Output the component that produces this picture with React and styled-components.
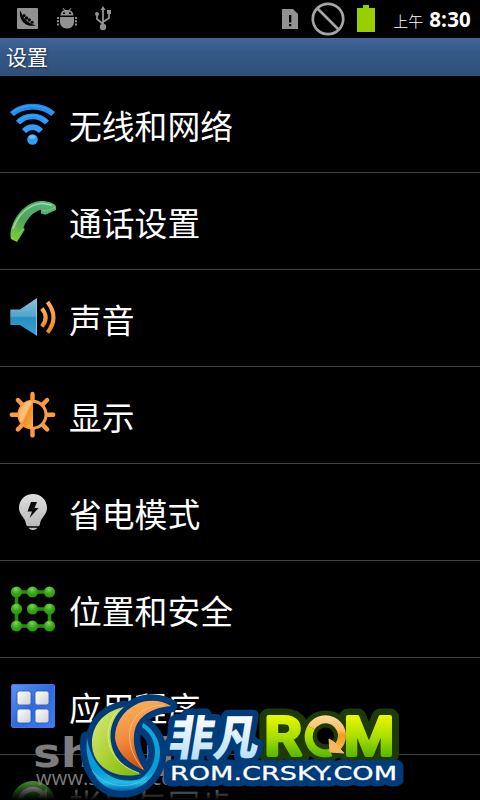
import styled, { createGlobalStyle } from "styled-components";

const GlobalStyle = createGlobalStyle`
    body {
        margin: 0;
        background: #000;
        overflow: hidden;
    }
`

function PeaIcon(){
    return <svg width="21" height="21" viewBox="0 0 21 21">
        <rect width="21" height="21" rx="1" fill="#919191" />
        <path d="M3 2.5L5 6C7 12 13 16 19 17.3C11 19.5 3 15 2.8 5Z" fill="#050505" />
        <g fill="#050505">
            <circle cx="7.2" cy="7.5" r="1.5" />
            <circle cx="9.5" cy="10" r="1.7" />
            <circle cx="12.3" cy="12" r="1.7" />
            <circle cx="15.2" cy="14.3" r="1.5" />
        </g>
    </svg>
}

function AndroidIcon(){
    return <svg width="20" height="21" viewBox="0 0 20 21" fill="#919191">
        <path d="M3.5 7.5C3.5 4.5 5.5 2.6 7 2.2L5.5 0H6.5L8 1.9H12L13.5 0H14.5L13 2.2C14.5 2.6 16.5 4.5 16.5 7.5Z" />
        <path d="M3 9H17V14C17 18 14 20.5 10 20.5S3 18 3 14Z" />
        <path d="M0 9H2V11H0ZM0 12.3H2V14.3H0ZM0 15.6H2V17.6H0ZM18 9H20V11H18ZM18 12.3H20V14.3H18ZM18 15.6H20V17.6H18Z" />
        <rect x="6" y="4.5" width="2" height="1.5" fill="#000" />
        <rect x="12" y="4.5" width="2" height="1.5" fill="#000" />
    </svg>
}

function UsbIcon(){
    return <svg width="17" height="25" viewBox="0 0 17 25" fill="none" stroke="#919191" strokeWidth="1.8">
        <path d="M8 20V3M8 18L2 13V8M8 16L14 12V6" />
        <path d="M5.5 4L8 0L10.5 4Z" fill="#919191" stroke="none" />
        <circle cx="8" cy="21" r="3.2" fill="#919191" stroke="none" />
        <circle cx="2" cy="8" r="2" fill="#919191" stroke="none" />
        <rect x="12" y="4" width="4" height="4" fill="#919191" stroke="none" />
    </svg>
}

function SimIcon(){
    return <svg width="16" height="20" viewBox="0 0 16 20">
        <path d="M0 0H11L16 5V20H0Z" fill="#919191" />
        <path d="M7 6H9.3V13.5H7ZM7 15H9.3V17.2H7Z" fill="#000" />
    </svg>
}

function BlockedIcon(){
    return <svg width="34" height="34" viewBox="0 0 34 34" fill="none" stroke="#a5a5a5" strokeWidth="2.7">
        <circle cx="17" cy="17" r="15.2" />
        <path d="M6.5 6.5L27.5 27.5" />
    </svg>
}

function BatteryIcon(){
    return <svg width="18" height="27" viewBox="0 0 18 27">
        <path d="M6 0H12V3H18V27H0V3H6Z" fill="#96d000" />
    </svg>
}

function WifiIcon(){
    return <svg width="48" height="48" viewBox="0 0 48 48">
        <defs>
            <linearGradient id="wifi" gradientUnits="userSpaceOnUse" x1="0" y1="3" x2="0" y2="45">
                <stop offset="0" stopColor="#1b86ee" />
                <stop offset="0.5" stopColor="#2f9cf8" />
                <stop offset="1" stopColor="#2f9cff" />
            </linearGradient>
        </defs>
        <g fill="none" stroke="url(#wifi)" strokeWidth="5.6">
            <path d="M2.8 14C14 4.2 33 4.2 44.2 14" />
            <path d="M9 22.7C17 14.2 30 14.2 38 22.7" />
            <path d="M15 31.2C20 25.8 27 25.8 32 31.2" />
        </g>
        <circle cx="23.5" cy="39.5" r="5.3" fill="url(#wifi)" />
        <path d="M3.5 12.5C14 3.4 33 3.4 43.5 12.5M9.8 20.8C17 13.6 30 13.6 37.2 20.8" fill="none" stroke="#63b9ff" strokeOpacity="0.5" />
        <ellipse cx="23.3" cy="37" rx="3.3" ry="2" fill="#8dd3ff" fillOpacity="0.65" />
    </svg>
}

function PhoneIcon(){
    return <svg width="48" height="48" viewBox="0 0 48 48">
        <defs>
            <linearGradient id="phone" x1="0.9" y1="0" x2="0.1" y2="1">
                <stop offset="0" stopColor="#58b583" />
                <stop offset="0.6" stopColor="#4ea455" />
                <stop offset="1" stopColor="#7bd03a" />
            </linearGradient>
        </defs>
        <path d="M1.5 39C1.5 25 13 6 31 4C38 3.5 46 6 47 9.5V13L36.5 17.7L32 16.5L32 12.8C25 14.5 18 21 14.5 30.5L15.8 32.5L8 45L2 42Z" fill="url(#phone)" />
        <path d="M4 32C9 18 19 8 33 6.3L43 8.2" fill="none" stroke="#b1e7bb" strokeWidth="1.6" strokeOpacity="0.8" />
        <path d="M33 13.5L37.5 13.8L46 10.5" fill="none" stroke="#8cd9a0" strokeOpacity="0.5" />
        <path d="M8.5 38L14.5 32" fill="none" stroke="#b0f07a" strokeOpacity="0.5" />
    </svg>
}

function SpeakerIcon(){
    return <svg width="48" height="48" viewBox="0 0 48 48">
        <defs>
            <linearGradient id="speaker" x1="0" y1="0" x2="0" y2="1">
                <stop offset="0" stopColor="#8dc5df" />
                <stop offset="0.48" stopColor="#50a4cc" />
                <stop offset="0.52" stopColor="#258fc4" />
                <stop offset="1" stopColor="#3ba0d5" />
            </linearGradient>
            <linearGradient id="wave" x1="0" y1="0" x2="0" y2="1">
                <stop offset="0" stopColor="#ffad63" />
                <stop offset="1" stopColor="#f68a1d" />
            </linearGradient>
        </defs>
        <path d="M1.3 15.5H11L28 4V42L11 31H1.3Z" fill="url(#speaker)" />
        <path d="M27.5 5V41" stroke="#8ec3da" />
        <g fill="none" stroke="url(#wave)" strokeWidth="4">
            <path d="M32.8 14.5Q40.5 23.5 32.8 32.5" />
            <path d="M38.5 8Q50.5 23.5 38.5 38.5" />
        </g>
    </svg>
}

function BrightnessIcon(){
    const rays = [0,45,90,135,180,225,270,315];
    return <svg width="48" height="48" viewBox="0 0 48 48">
        <defs>
            <linearGradient id="sun" x1="0" y1="0" x2="1" y2="1">
                <stop offset="0" stopColor="#ffa54a" />
                <stop offset="0.45" stopColor="#ffc27c" />
                <stop offset="0.55" stopColor="#f48e28" />
                <stop offset="1" stopColor="#ffad57" />
            </linearGradient>
        </defs>
        {rays.map((angle)=><path
            key={angle}
            d="M23.5 3V9.5"
            stroke="#ff9a3d"
            strokeWidth="4.4"
            strokeLinecap="round"
            transform={`rotate(${angle} 23.5 23.7)`}
        />)}
        <circle cx="23.5" cy="23.7" r="13.5" fill="#000" stroke="#f99c43" strokeWidth="3" />
        <path d="M24 9.7A14 14 0 0 0 24 37.7Z" fill="url(#sun)" />
    </svg>
}

function BulbIcon(){
    return <svg width="48" height="48" viewBox="0 0 48 48">
        <defs>
            <linearGradient id="bulb" x1="0" y1="0" x2="0" y2="1">
                <stop offset="0" stopColor="#dedede" />
                <stop offset="1" stopColor="#bababa" />
            </linearGradient>
        </defs>
        <path d="M24 6C32 6 38 12 38 20C38 27 31.5 29.5 31 36Q30.7 38.2 29 38.2H19Q17.3 38.2 17 36C16.5 29.5 10 27 10 20C10 12 16 6 24 6Z" fill="url(#bulb)" />
        <path d="M19.5 39.8H28.5Q27 42 24 42T19.5 39.8Z" fill="#c4c4c4" />
        <path d="M22 14H28L25.5 20H29.5L20.5 30L23 23.5H18.5Z" fill="#0a0a0a" />
    </svg>
}

const patternNodes = [[7.5,7],[23.5,7],[40.5,7],[7.5,24],[23.5,24],[40.5,24],[7.5,41],[23.5,41],[40.5,41]];

function PatternIcon(){
    return <svg width="48" height="48" viewBox="0 0 48 48">
        <defs>
            <radialGradient id="node" cx="0.45" cy="0.25" r="0.8">
                <stop offset="0" stopColor="#7ed653" />
                <stop offset="0.5" stopColor="#36a81a" />
                <stop offset="1" stopColor="#259008" />
            </radialGradient>
        </defs>
        <path d="M40.5 7H7.5V41H40.5V24H23.5" fill="none" stroke="#2b8a12" strokeWidth="3.6" />
        {patternNodes.map(([x,y])=><circle key={`${x}-${y}`} cx={x} cy={y} r="5.6" fill="url(#node)" />)}
    </svg>
}

function AppsIcon(){
    return <svg width="48" height="48" viewBox="0 0 48 48">
        <defs>
            <linearGradient id="apps" x1="0" y1="0" x2="1" y2="1">
                <stop offset="0" stopColor="#5c96ee" />
                <stop offset="0.5" stopColor="#2f6ade" />
                <stop offset="1" stopColor="#3c7df0" />
            </linearGradient>
            <linearGradient id="tile" x1="0" y1="0" x2="1" y2="1">
                <stop offset="0" stopColor="#fff" />
                <stop offset="1" stopColor="#cfcfcf" />
            </linearGradient>
        </defs>
        <rect x="2.5" y="2.5" width="43" height="43" rx="1.5" fill="url(#apps)" stroke="#3f78e6" />
        <g fill="url(#tile)" stroke="#2458bd" strokeWidth="0.8">
            <rect x="8" y="9" width="14" height="14" rx="2.5" />
            <rect x="26" y="9" width="14" height="14" rx="2.5" />
            <rect x="8" y="27" width="14" height="14" rx="2.5" />
            <rect x="26" y="27" width="14" height="14" rx="2.5" />
        </g>
    </svg>
}

function SyncIcon(){
    return <svg width="48" height="48" viewBox="0 0 48 48">
        <defs>
            <linearGradient id="sync" x1="0" y1="0" x2="0" y2="1">
                <stop offset="0" stopColor="#6cc447" />
                <stop offset="0.35" stopColor="#46992c" />
                <stop offset="1" stopColor="#1e5b10" />
            </linearGradient>
        </defs>
        <circle cx="24" cy="24" r="22" fill="url(#sync)" />
        <path d="M11 24A13 13 0 0 1 34 15" fill="none" stroke="#e0e6dd" strokeWidth="5" />
        <path d="M29 18L38 20V9Z" fill="#e0e6dd" />
    </svg>
}

const items = [
    { label:"无线和网络", Icon:WifiIcon },
    { label:"通话设置", Icon:PhoneIcon },
    { label:"声音", Icon:SpeakerIcon },
    { label:"显示", Icon:BrightnessIcon },
    { label:"省电模式", Icon:BulbIcon },
    { label:"位置和安全", Icon:PatternIcon },
    { label:"应用程序", Icon:AppsIcon },
    { label:"帐户与同步", Icon:SyncIcon },
];

const blueRing = "M87 738C84 762 96 791 122 791C144 791 160 773 160 752C160 739 152 728 143 723L142 727C151 733 155 742 155 752C155 764 148 774 140 779C115 786 92 770 87 738Z";
const greenMoon = "M124 707C101 712 91 728 92 746C94 768 116 780 141 774C120 766 112 755 110.5 738C110 724 116 714 124 707Z";
const orangeMoon = "M171 706C162 700 147 699 137 704C122 711 115 724 115 738C117 754 130 764 145 771C137 758 133 748 134 736C135 719 148 708 171 706Z";

function RomLogo(){
    return <Logo viewBox="0 690 480 110">
        <defs>
            <linearGradient id="ring" x1="0" y1="0" x2="0" y2="1">
                <stop offset="0" stopColor="#10a9dd" />
                <stop offset="0.7" stopColor="#0799d8" />
                <stop offset="0.88" stopColor="#20bde0" />
                <stop offset="1" stopColor="#075bb2" />
            </linearGradient>
            <linearGradient id="green" x1="0" y1="0" x2="1" y2="1">
                <stop offset="0" stopColor="#dcec7c" />
                <stop offset="0.5" stopColor="#add136" />
                <stop offset="1" stopColor="#7cb500" />
            </linearGradient>
            <linearGradient id="orange" x1="0.2" y1="0" x2="0.5" y2="1">
                <stop offset="0" stopColor="#fbb35f" />
                <stop offset="0.5" stopColor="#f28a3d" />
                <stop offset="1" stopColor="#c94703" />
            </linearGradient>
            <linearGradient id="ice" x1="0" y1="0" x2="0" y2="1">
                <stop offset="0.2" stopColor="#fff" />
                <stop offset="0.9" stopColor="#b4ddf7" />
            </linearGradient>
            <linearGradient id="lime" gradientUnits="userSpaceOnUse" x1="0" y1="715" x2="0" y2="758">
                <stop offset="0" stopColor="#eaf900" />
                <stop offset="0.5" stopColor="#abdf00" />
                <stop offset="1" stopColor="#53b400" />
            </linearGradient>
            <linearGradient id="arrow" gradientUnits="userSpaceOnUse" x1="0" y1="715" x2="0" y2="755">
                <stop offset="0" stopColor="#ffdc97" />
                <stop offset="0.4" stopColor="#f8bd65" />
                <stop offset="0.5" stopColor="#eea01c" />
                <stop offset="1" stopColor="#f5ba61" />
            </linearGradient>
        </defs>

        {/* dark outlines under the lettering */}
        <g fill="#1d3a07" stroke="#1d3a07" strokeWidth="17" strokeLinejoin="round">
            <RomLetter x="264.5" y="755" textLength="37">R</RomLetter>
            <circle cx="325.5" cy="736" r="17" fill="none" />
            <RomLetter x="344" y="755" textLength="50">M</RomLetter>
        </g>
        <g fill="#003b7a" stroke="#003b7a" strokeWidth="13" strokeLinejoin="round">
            <path d={blueRing} />
            <path d={greenMoon} />
            <path d={orangeMoon} />
            <CnLetter x="0" y="0" transform="translate(167 754.5) skewX(-9)" textLength="90">非凡</CnLetter>
            <UrlText x="170" y="780" textLength="227">ROM.CRSKY.COM</UrlText>
        </g>

        <path d={blueRing} fill="url(#ring)" />
        <path d={greenMoon} fill="url(#green)" />
        <path d="M118 711C102 726 103 761 139 773" fill="none" stroke="#f1f6a9" strokeOpacity="0.7" />
        <path d={orangeMoon} fill="url(#orange)" />
        <path d="M164 705C126 706 120 743 143 769" fill="none" stroke="#ffc58b" strokeOpacity="0.8" />
        <path d="M92 770C103 787 130 791 147 777" fill="none" stroke="#5bd7ec" strokeOpacity="0.6" />

        <CnLetter x="0" y="0" transform="translate(167 754.5) skewX(-9)" textLength="90" fill="url(#ice)">非凡</CnLetter>
        <g fill="url(#lime)" stroke="url(#lime)" strokeWidth="4" strokeLinejoin="round">
            <RomLetter x="264.5" y="755" textLength="37">R</RomLetter>
            <RomLetter x="344" y="755" textLength="50">M</RomLetter>
        </g>
        <path d="M311.2 727.5A16.7 17 0 0 0 331 752.5" fill="none" stroke="url(#lime)" strokeWidth="8" />
        <path d="M311.2 727.5A16.7 17 0 0 1 342 734Q342.5 743 336 748" fill="none" stroke="url(#arrow)" strokeWidth="8" />
        <path d="M329 739L330 752L344 753L339 748L334 742Z" fill="#f7b75c" stroke="#f7b75c" />
        <UrlText x="170" y="780" textLength="227" fill="#fff" stroke="#fff" strokeWidth="0.3">ROM.CRSKY.COM</UrlText>
    </Logo>
}

function App(){
    return <>
      <GlobalStyle />
      <Screen>
        <StatusBar>
            <Notifications>
                <PeaIcon />
                <AndroidIcon />
                <UsbIcon />
            </Notifications>
            <SystemIcons>
                <SimIcon />
                <BlockedIcon />
                <BatteryIcon />
            </SystemIcons>
            <Period>上午</Period>
            <Clock>8:30</Clock>
        </StatusBar>
        <TitleBar>设置</TitleBar>
        <List>
            {items.map(({label,Icon})=><Row key={label}>
                <Icon />
                <Label>{label}</Label>
            </Row>)}
        </List>
        <BottomFade />
        <Watermark viewBox="0 725 240 75">
            <SiteName x="33" y="767" textLength="158">shouji</SiteName>
            <SiteUrl x="36" y="785" textLength="156">www.shouji.com</SiteUrl>
        </Watermark>
        <RomLogo />
      </Screen>
    </>
}

export default App

const Screen = styled.div`
    position: relative;
    display: flex;
    flex-direction: column;
    width: 480px;
    height: 800px;
    overflow: hidden;
    background: #000;
    color: #fff;
    font-family: "Open Sans", "Noto Sans CJK SC", sans-serif;

    svg {
        flex-shrink: 0;
    }
`

const StatusBar = styled.div`
    display: flex;
    align-items: center;
    flex: 0 0 38px;
    box-sizing: border-box;
    padding: 0 9px 1px 17px;
`

const Notifications = styled.div`
    display: flex;
    align-items: center;
    gap: 18.5px;
    flex: 1;
`

const SystemIcons = styled.div`
    display: flex;
    align-items: center;
    gap: 12.5px;
    margin-right: 18px;
`

const Period = styled.span`
    margin: 4px 6px 0 0;
    font-family: "Noto Sans CJK SC", sans-serif;
    font-size: 15px;
    font-weight: 300;
    line-height: 20px;
`

const Clock = styled.span`
    font-size: 20.5px;
    font-weight: 700;
    line-height: 24px;
    letter-spacing: 0.2px;
`

const TitleBar = styled.div`
    flex: 0 0 38px;
    box-sizing: border-box;
    padding-left: 6px;
    background: linear-gradient(#42659a, #355a8a 35%, #2e4f77);
    font-family: "Noto Sans CJK SC", sans-serif;
    font-size: 21px;
    line-height: 37px;
    text-shadow: 1px 1px 2px #1b2c45;
`

const List = styled.div`
    flex: 1;
    min-height: 0;
    overflow: hidden;
`

const Row = styled.div`
    display: flex;
    align-items: center;
    gap: 12px;
    box-sizing: border-box;
    height: 97px;
    padding-left: 9px;
    border-bottom: 1px solid #424242;
`

const Label = styled.span`
    padding-top: 1px;
    font-family: "Noto Sans CJK SC", sans-serif;
    font-size: 32.8px;
    line-height: 48px;
    white-space: nowrap;
`

const BottomFade = styled.div`
    position: absolute;
    left: 0;
    right: 0;
    bottom: 0;
    height: 26px;
    background: linear-gradient(rgba(0, 0, 0, 0), #000);
`

const Watermark = styled.svg`
    position: absolute;
    left: 0;
    bottom: 0;
    width: 240px;
    height: 75px;
    fill: #7c7c7c;
`

const SiteName = styled.text.attrs({ lengthAdjust:"spacingAndGlyphs" })`
    font-family: "DejaVu Sans", sans-serif;
    font-size: 41px;
    font-weight: 700;
`

const SiteUrl = styled.text`
    font-family: "Open Sans", sans-serif;
    font-size: 20px;
`

const Logo = styled.svg`
    position: absolute;
    left: 0;
    bottom: 0;
    width: 480px;
    height: 110px;
`

const RomLetter = styled.text.attrs({ lengthAdjust:"spacingAndGlyphs" })`
    font-family: Roboto, sans-serif;
    font-size: 53px;
    font-weight: 500;
`

const CnLetter = styled.text.attrs({ lengthAdjust:"spacingAndGlyphs" })`
    font-family: "Noto Sans CJK SC", sans-serif;
    font-size: 47px;
    font-weight: 900;
`

const UrlText = styled.text.attrs({ lengthAdjust:"spacingAndGlyphs" })`
    font-family: "DejaVu Sans", sans-serif;
    font-size: 19.5px;
`
